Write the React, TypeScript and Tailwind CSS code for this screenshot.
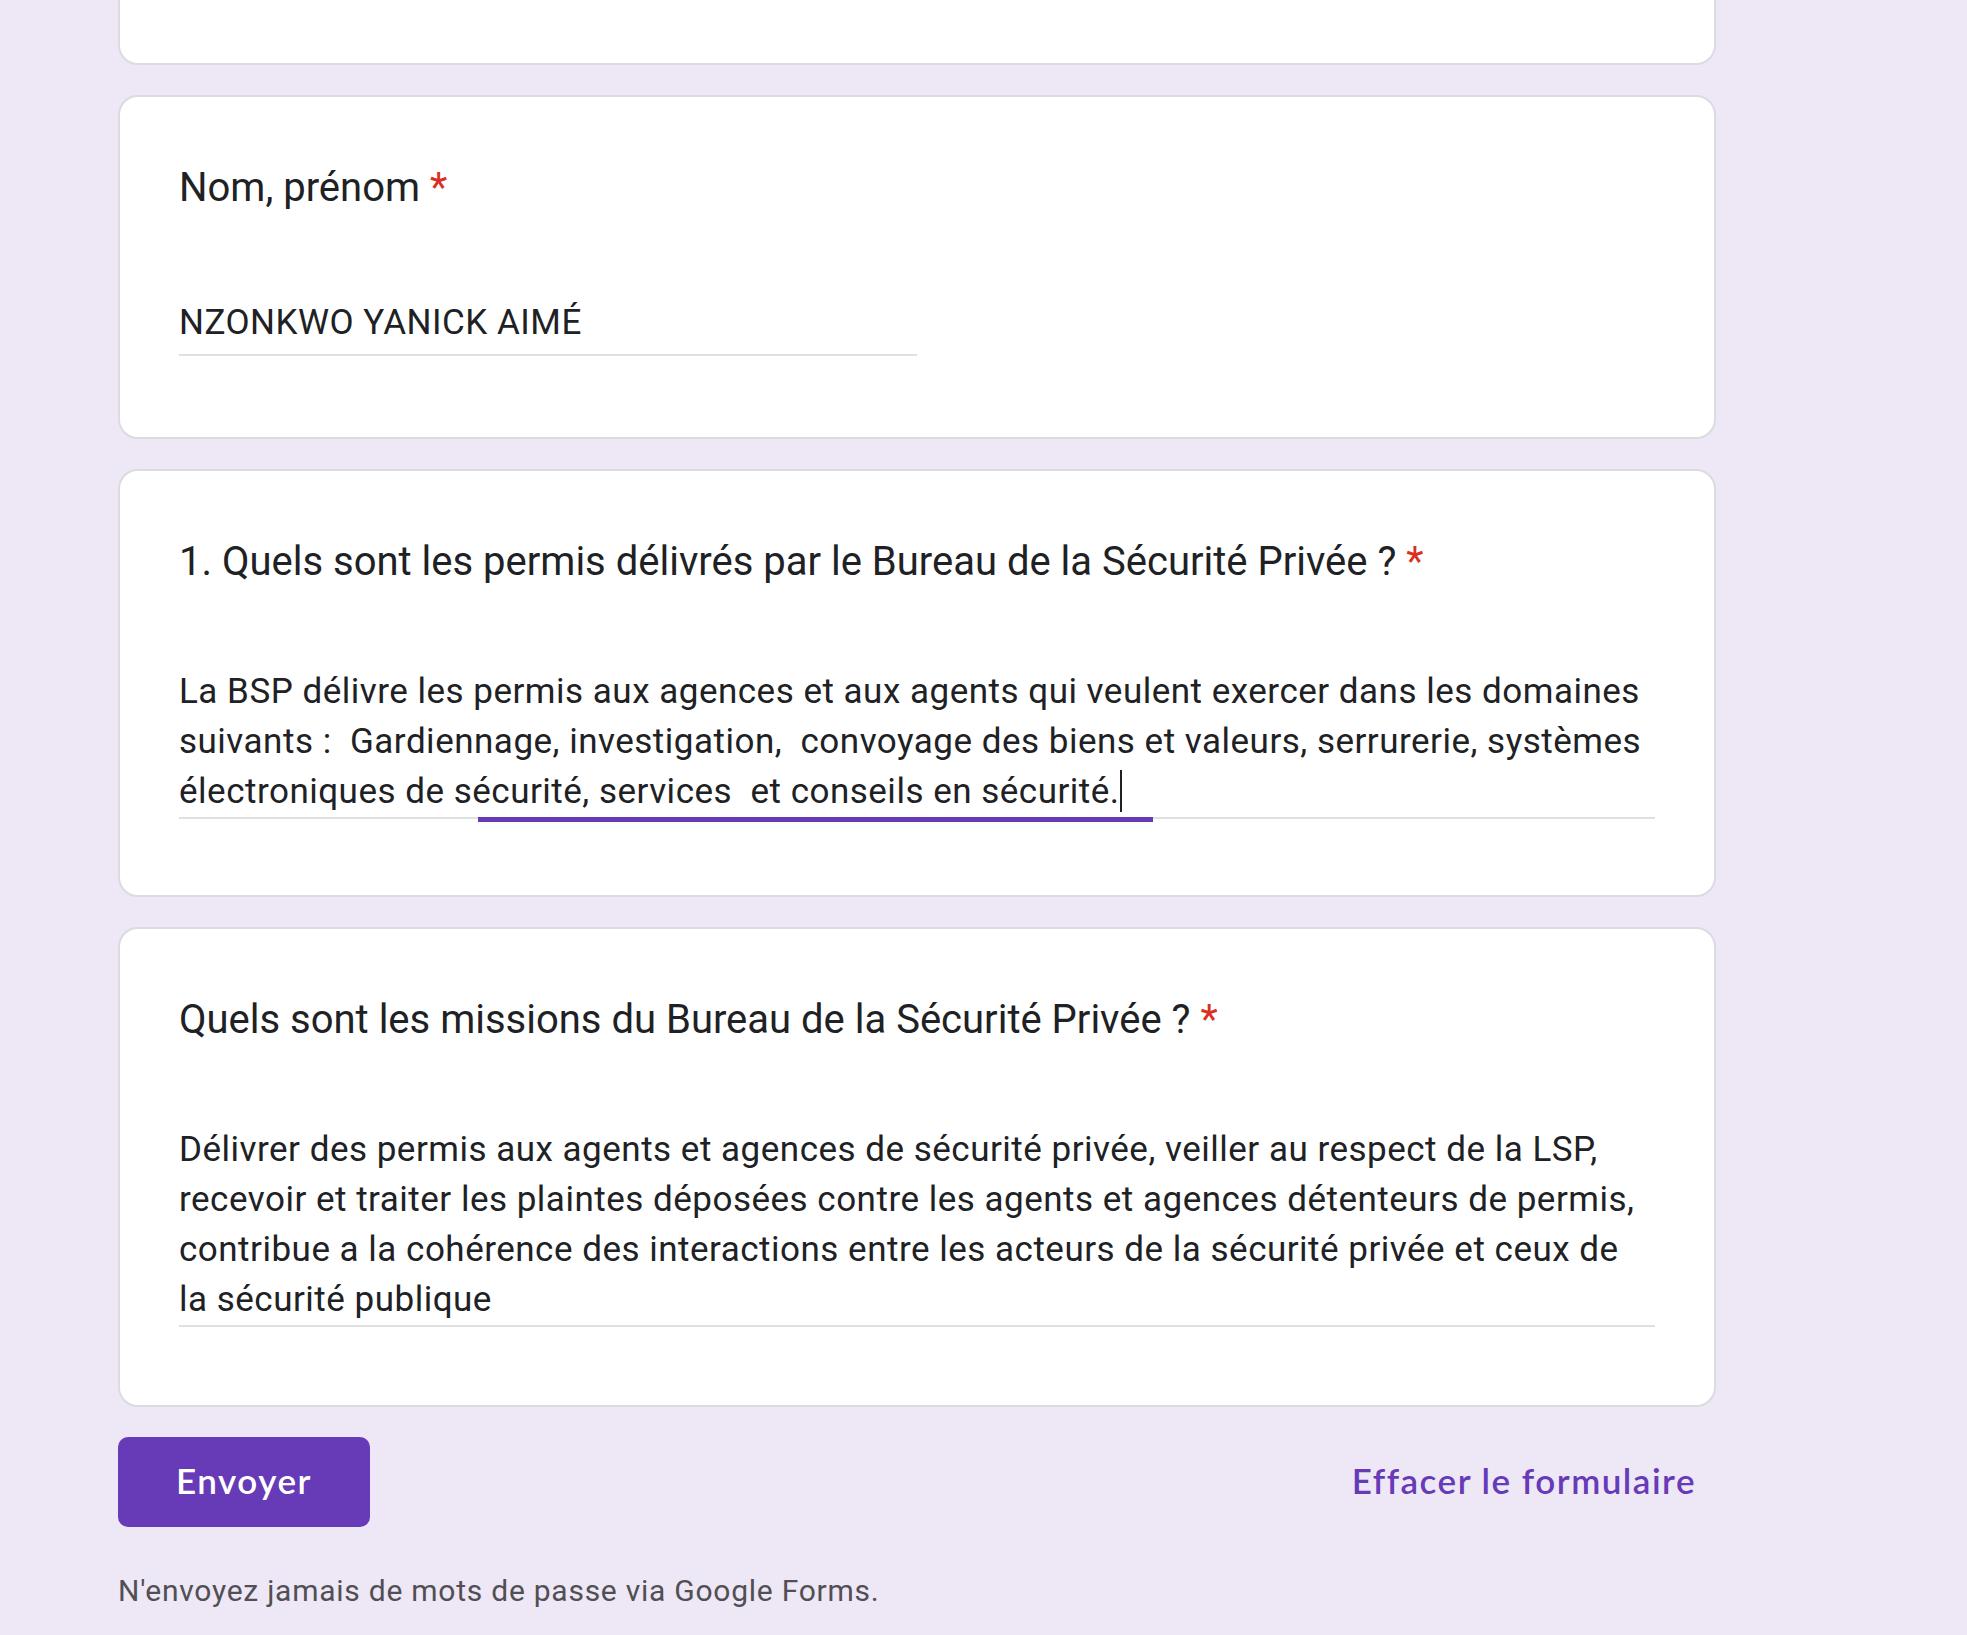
import React from 'react';

const roboto = { fontFamily: 'Roboto, "Liberation Sans", sans-serif' };

const Required = () => <span className="text-[#d93025] pl-[10px]">*</span>;

const App: React.FC = () => {
  return (
    <div
      className="min-h-screen w-full bg-[#ede7f6] pl-[118px] pb-[20px] text-[#202124] font-['Roboto','Liberation_Sans',sans-serif]"
    >
      <div className="w-[1598px] flex flex-col gap-[30px]">
        {/* end of the card above, cut off by the viewport */}
        <div className="h-[65px] bg-white border-2 border-t-0 border-[#dadce0] rounded-b-[20px]" />

        {/* Nom, prénom */}
        <div className="bg-white border-2 border-[#dadce0] rounded-[20px] px-[59px] pt-[61px] pb-[59px]">
          <div className="text-[40px] leading-[60px]">
            Nom, prénom<Required />
          </div>
          <div className="mt-[80px] w-1/2 border-b-2 border-[#e0e0e0] pb-[6px] text-[35px] leading-[50px] tracking-[0.5px]">
            NZONKWO YANICK AIMÉ
          </div>
          <div className="h-[22px]" />
        </div>

        {/* Question 1 */}
        <div className="bg-white border-2 border-[#dadce0] rounded-[20px] px-[59px] pt-[61px] pb-[59px]">
          <div className="text-[40px] leading-[60px]">
            1. Quels sont les permis délivrés par le Bureau de la Sécurité Privée ?<Required />
          </div>
          <div className="relative mt-[75px] border-b-2 border-[#e0e0e0] text-[35px] leading-[50px] tracking-[0.5px] whitespace-pre-wrap">
            {'La BSP délivre les permis aux agences et aux agents qui veulent exercer dans les domaines suivants :  Gardiennage, investigation,  convoyage des biens et valeurs, serrurerie, systèmes électroniques de sécurité, services  et conseils en sécurité.'}
            <span className="inline-block w-[2px] h-[42px] bg-[#202124] align-[-9px]" />
            <div className="absolute left-[299px] bottom-[-5px] w-[675px] h-[5px] bg-[#673ab7]" />
          </div>
          <div className="h-[17px]" />
        </div>

        {/* Question 2 */}
        <div className="bg-white border-2 border-[#dadce0] rounded-[20px] px-[59px] pt-[61px] pb-[59px]">
          <div className="text-[40px] leading-[60px]">
            Quels sont les missions du Bureau de la Sécurité Privée ?<Required />
          </div>
          <div className="mt-[75px] border-b-2 border-[#e0e0e0] text-[35px] leading-[50px] tracking-[0.5px] whitespace-pre-wrap">
            {'Délivrer des permis aux agents et agences de sécurité privée, veiller au respect de la LSP, recevoir et traiter les plaintes déposées contre les agents et agences détenteurs de permis, contribue a la cohérence des interactions entre les acteurs de la sécurité privée et ceux de la sécurité publique'}
          </div>
          <div className="h-[19px]" />
        </div>

        {/* actions */}
        <div className="flex items-center justify-between">
          <button className="h-[90px] px-[58px] pb-[4px] rounded-[10px] bg-[#673ab7] text-white text-[35px] font-semibold tracking-[1.5px] font-['Lato','Open_Sans',sans-serif]">
            Envoyer
          </button>
          <button className="h-[90px] px-[20px] pb-[4px] text-[#673ab7] text-[35px] font-semibold tracking-[1.5px] font-['Lato','Open_Sans',sans-serif]">
            Effacer le formulaire
          </button>
        </div>
      </div>

      <div
        style={roboto}
        className="mt-[44px] text-[30px] leading-[40px] tracking-[0.75px] text-[#514f54]"
      >
        N'envoyez jamais de mots de passe via Google Forms.
      </div>
    </div>
  );
};

export default App;
